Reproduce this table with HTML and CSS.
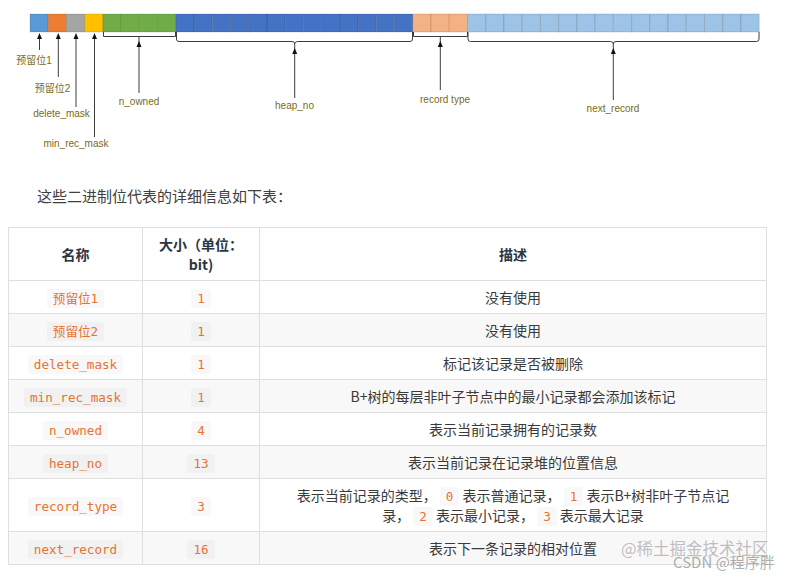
FILE: index.html
```html
<!DOCTYPE html>
<html lang="zh-CN">
<head>
<meta charset="utf-8">
<title>记录头信息</title>
<link rel="stylesheet" href="styles.css">
</head>
<body>
<div class="page">
  <figure class="figure">
    <svg class="diagram" width="788" height="184" viewBox="0 0 788 184" xmlns="http://www.w3.org/2000/svg">
      <g class="cells" stroke="rgba(0,0,0,0.13)" stroke-width="1">
        <rect x="30" y="14" width="18.23" height="18" fill="#5b9bd5"/>
        <rect x="48.23" y="14" width="18.23" height="18" fill="#ed7d31"/>
        <rect x="66.46" y="14" width="18.23" height="18" fill="#a5a5a5"/>
        <rect x="84.69" y="14" width="18.23" height="18" fill="#ffc000"/>
        <rect x="102.92" y="14" width="18.23" height="18" fill="#70ad47"/>
        <rect x="121.15" y="14" width="18.23" height="18" fill="#70ad47"/>
        <rect x="139.38" y="14" width="18.23" height="18" fill="#70ad47"/>
        <rect x="157.61" y="14" width="18.23" height="18" fill="#70ad47"/>
        <rect x="175.84" y="14" width="18.23" height="18" fill="#4472c4"/>
        <rect x="194.07" y="14" width="18.23" height="18" fill="#4472c4"/>
        <rect x="212.3" y="14" width="18.23" height="18" fill="#4472c4"/>
        <rect x="230.53" y="14" width="18.23" height="18" fill="#4472c4"/>
        <rect x="248.76" y="14" width="18.23" height="18" fill="#4472c4"/>
        <rect x="266.99" y="14" width="18.23" height="18" fill="#4472c4"/>
        <rect x="285.22" y="14" width="18.23" height="18" fill="#4472c4"/>
        <rect x="303.45" y="14" width="18.23" height="18" fill="#4472c4"/>
        <rect x="321.68" y="14" width="18.23" height="18" fill="#4472c4"/>
        <rect x="339.91" y="14" width="18.23" height="18" fill="#4472c4"/>
        <rect x="358.14" y="14" width="18.23" height="18" fill="#4472c4"/>
        <rect x="376.37" y="14" width="18.23" height="18" fill="#4472c4"/>
        <rect x="394.6" y="14" width="18.23" height="18" fill="#4472c4"/>
        <rect x="412.83" y="14" width="18.23" height="18" fill="#f4b183"/>
        <rect x="431.06" y="14" width="18.23" height="18" fill="#f4b183"/>
        <rect x="449.29" y="14" width="18.23" height="18" fill="#f4b183"/>
        <rect x="467.52" y="14" width="18.23" height="18" fill="#9dc3e6"/>
        <rect x="485.75" y="14" width="18.23" height="18" fill="#9dc3e6"/>
        <rect x="503.98" y="14" width="18.23" height="18" fill="#9dc3e6"/>
        <rect x="522.21" y="14" width="18.23" height="18" fill="#9dc3e6"/>
        <rect x="540.44" y="14" width="18.23" height="18" fill="#9dc3e6"/>
        <rect x="558.67" y="14" width="18.23" height="18" fill="#9dc3e6"/>
        <rect x="576.9" y="14" width="18.23" height="18" fill="#9dc3e6"/>
        <rect x="595.13" y="14" width="18.23" height="18" fill="#9dc3e6"/>
        <rect x="613.36" y="14" width="18.23" height="18" fill="#9dc3e6"/>
        <rect x="631.59" y="14" width="18.23" height="18" fill="#9dc3e6"/>
        <rect x="649.82" y="14" width="18.23" height="18" fill="#9dc3e6"/>
        <rect x="668.05" y="14" width="18.23" height="18" fill="#9dc3e6"/>
        <rect x="686.28" y="14" width="18.23" height="18" fill="#9dc3e6"/>
        <rect x="704.51" y="14" width="18.23" height="18" fill="#9dc3e6"/>
        <rect x="722.74" y="14" width="18.23" height="18" fill="#9dc3e6"/>
        <rect x="740.97" y="14" width="18.23" height="18" fill="#9dc3e6"/>
      </g>
      <g class="lines" fill="none" stroke="#3c3c3c" stroke-width="1">
        <path d="M103.5,32 V36.5 H175.5 V32"/>
        <path d="M413.5,32 V36.5 H467.5 V32"/>
        <path d="M176.5,32 V39 Q176.5,41.5 179,41.5 H292 Q294.7,41.5 294.7,44 Q294.7,41.5 297.5,41.5 H410 Q412.5,41.5 412.5,39 V32"/>
        <path d="M468,32 V39 Q468,41.5 470.5,41.5 H610.5 Q613.3,41.5 613.3,44 Q613.3,41.5 616,41.5 H756.5 Q759,41.5 759,39 V32"/>
        <path d="M39.5,36 V50"/>
        <path d="M58.3,36 V77"/>
        <path d="M76,36 V107"/>
        <path d="M94.5,36 V137"/>
        <path d="M139,37 V93"/>
        <path d="M294.7,44 V98"/>
        <path d="M440.3,37 V90"/>
        <path d="M613.3,44 V100"/>
      </g>
      <g class="heads" fill="#111">
        <polygon points="39.5,33 37,39 42,39"/>
        <polygon points="58.3,33 55.8,39 60.8,39"/>
        <polygon points="76,33 73.5,39 78.5,39"/>
        <polygon points="94.5,33 92,39 97,39"/>
        <polygon points="139,41 136.5,47 141.5,47"/>
        <polygon points="294.7,48 292.2,54 297.2,54"/>
        <polygon points="440.3,41 437.8,47 442.8,47"/>
        <polygon points="613.3,48 610.8,54 615.8,54"/>
      </g>
      <g class="labels">
        <text x="34" y="63.5" text-anchor="middle">预留位1</text>
        <text x="52.5" y="91.5" text-anchor="middle">预留位2</text>
        <text x="61.5" y="116.5" text-anchor="middle">delete_mask</text>
        <text x="76" y="146.5" text-anchor="middle">min_rec_mask</text>
        <text x="139" y="104.5" text-anchor="middle">n_owned</text>
        <text x="294.5" y="108.5" text-anchor="middle">heap_no</text>
        <text x="445" y="102.5" text-anchor="middle">record type</text>
        <text x="613" y="111.5" text-anchor="middle">next_record</text>
      </g>
    </svg>
  </figure>

  <p class="intro">这些二进制位代表的详细信息如下表：</p>

  <table class="info">
    <colgroup>
      <col class="c-name">
      <col class="c-size">
      <col class="c-desc">
    </colgroup>
    <thead>
      <tr>
        <th>名称</th>
        <th>大小（单位：bit)</th>
        <th>描述</th>
      </tr>
    </thead>
    <tbody>
      <tr><td><code>预留位1</code></td><td><code>1</code></td><td>没有使用</td></tr>
      <tr><td><code>预留位2</code></td><td><code>1</code></td><td>没有使用</td></tr>
      <tr><td><code>delete_mask</code></td><td><code>1</code></td><td>标记该记录是否被删除</td></tr>
      <tr><td><code>min_rec_mask</code></td><td><code>1</code></td><td>B+树的每层非叶子节点中的最小记录都会添加该标记</td></tr>
      <tr><td><code>n_owned</code></td><td><code>4</code></td><td>表示当前记录拥有的记录数</td></tr>
      <tr><td><code>heap_no</code></td><td><code>13</code></td><td>表示当前记录在记录堆的位置信息</td></tr>
      <tr><td><code>record_type</code></td><td><code>3</code></td><td>表示当前记录的类型， <code>0</code> 表示普通记录， <code>1</code> 表示B+树非叶子节点记录， <code>2</code> 表示最小记录， <code>3</code> 表示最大记录</td></tr>
      <tr><td><code>next_record</code></td><td><code>16</code></td><td>表示下一条记录的相对位置</td></tr>
    </tbody>
  </table>

  <div class="watermark">
    <span class="wm-juejin">@稀土掘金技术社区</span>
    <span class="wm-csdn">CSDN @程序胖</span>
  </div>
</div>
</body>
</html>
```

FILE: styles.css
```css
html, body {
  margin: 0;
  padding: 0;
  background: #ffffff;
}

.page {
  position: relative;
  width: 788px;
  height: 579px;
  font-family: "Noto Sans CJK SC", "Noto Sans", sans-serif;
  color: #333333;
}

.figure {
  margin: 0;
  height: 184px;
}

.diagram {
  display: block;
}

.labels text {
  font-family: "Liberation Sans", "Noto Sans CJK SC", sans-serif;
  font-size: 10px;
  fill: #7a6a22;
}

.intro {
  margin: 0;
  padding-left: 37px;
  font-size: 15px;
  line-height: 24px;
  color: #404040;
}

.info {
  margin: 19px 0 0 8px;
  width: 758px;
  border-collapse: collapse;
  table-layout: fixed;
  font-size: 14px;
}

.c-name { width: 134px; }
.c-size { width: 117px; }
.c-desc { width: 507px; }

.info th,
.info td {
  border: 1px solid #dfdfdf;
  text-align: center;
  line-height: 20px;
}

.info th {
  padding: 6px 15px;
  font-weight: 700;
  color: #2c3440;
}

.info td {
  padding: 6px 15px;
  height: 20px;
  color: #3a3a3a;
}

.info td:nth-child(3) {
  padding: 6px 24px;
}

.info tbody tr:nth-child(even) {
  background: #f8f8f8;
}

.info code {
  font-family: "DejaVu Sans Mono", "Noto Sans CJK SC", monospace;
  font-size: 12.6px;
  line-height: 1;
  color: #e8722f;
  background: rgba(0, 0, 0, 0.028);
  padding: 2px 6px;
  border-radius: 3px;
}

.watermark {
  position: absolute;
  left: 0;
  top: 0;
  pointer-events: none;
}

.wm-juejin {
  position: absolute;
  left: 621px;
  top: 537px;
  font-size: 16.5px;
  line-height: 22px;
  color: rgba(140, 140, 140, 0.55);
  white-space: nowrap;
}

.wm-csdn {
  position: absolute;
  left: 673px;
  top: 551px;
  font-size: 15px;
  line-height: 21px;
  color: rgba(120, 120, 120, 0.6);
  white-space: nowrap;
}
```
